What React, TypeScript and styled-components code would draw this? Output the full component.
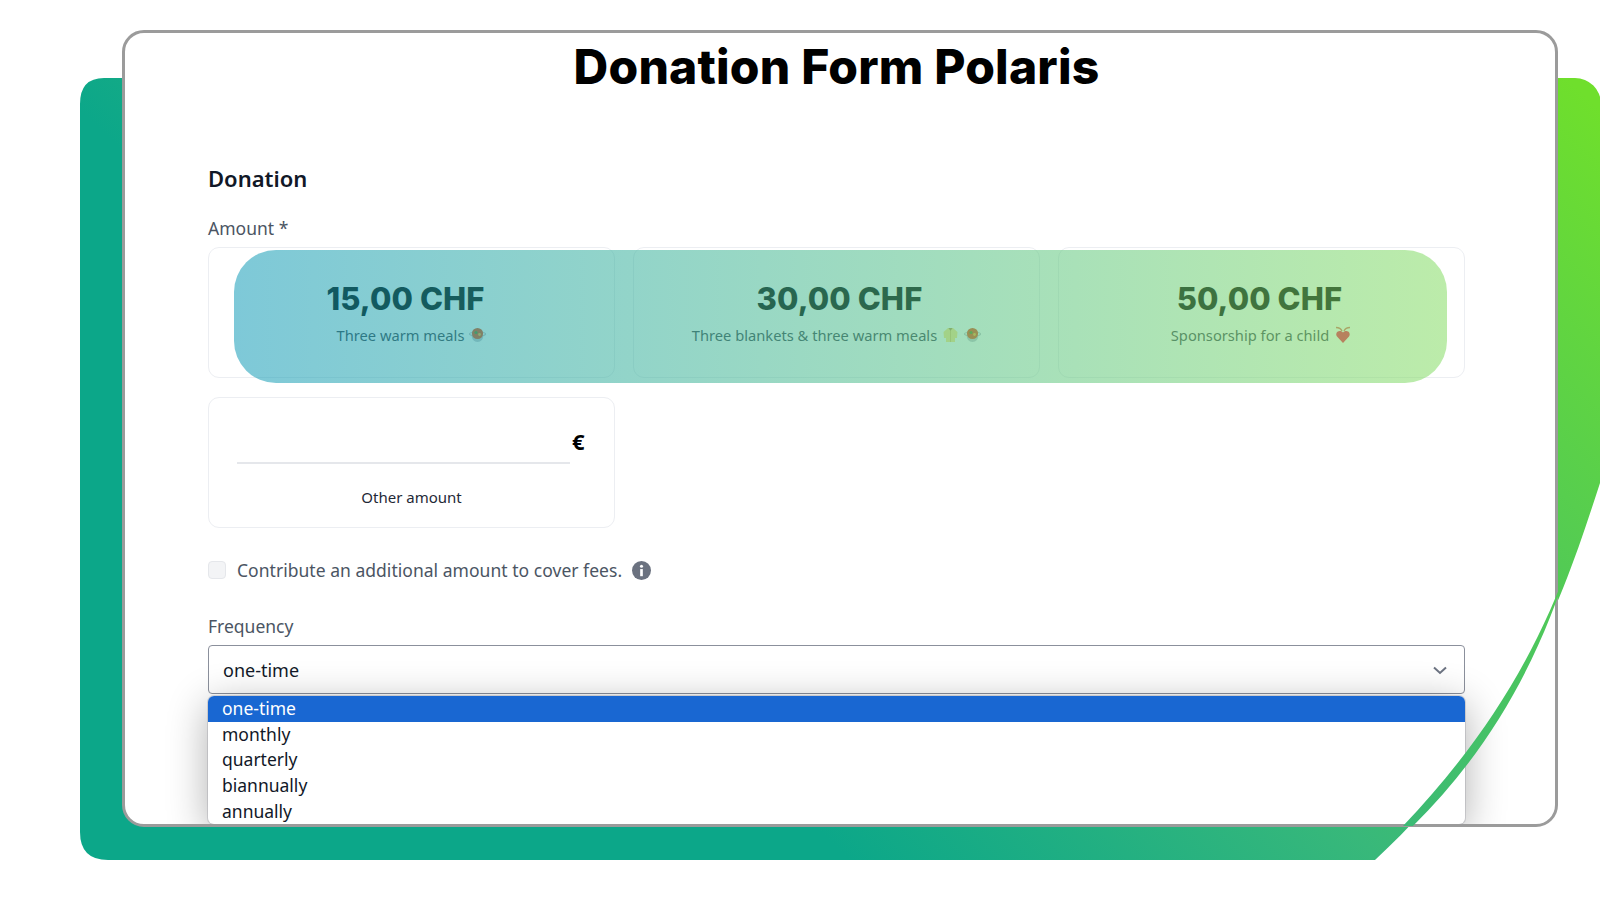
import React from "react";
import styled, { createGlobalStyle } from "styled-components";

const Global = createGlobalStyle`
  html, body { margin: 0; padding: 0; background: #fff; }
  * { box-sizing: border-box; }
`;

const BODY = `"Noto Sans", "Open Sans", sans-serif`;
const HEAD = `Inter, "Liberation Sans", sans-serif`;

const Page = styled.div`
  position: relative;
  width: 1600px;
  height: 900px;
  overflow: hidden;
  padding: 30px 42px 0 122px;
  font-family: ${BODY};
`;
const Art = styled.svg<{ $top?: boolean }>`
  position: absolute;
  inset: 0;
  z-index: ${(p) => (p.$top ? 2 : 0)};
  pointer-events: none;
`;
const Card = styled.main`
  position: relative;
  z-index: 1;
  height: 797px;
  background: #fff;
  border: 3px solid #9b9b9b;
  border-radius: 22px;
  overflow: hidden;
  padding: 0 90px 0 83px;
`;
const Title = styled.h1`
  margin: 6px 0 0;
  height: 56px;
  font: 800 48px/56px ${HEAD};
  letter-spacing: 0.2px;
  color: #000;
  text-align: center;
`;
const Section = styled.h2`
  margin: 68px 0 0;
  font: 600 22px/30px ${BODY};
  color: #111827;
`;
const Label = styled.div`
  font: 400 17.5px/24px ${BODY};
  color: #4b5563;
`;
const AmountLabel = styled(Label)`
  margin-top: 23px;
`;
const Tiles = styled.div`
  position: relative;
  display: grid;
  grid-template-columns: repeat(3, 1fr);
  grid-auto-rows: 131px;
  column-gap: 18px;
  row-gap: 19px;
  margin-top: 7px;
`;
const Tile = styled.div`
  display: flex;
  flex-direction: column;
  align-items: center;
  border: 1.5px solid #eceef2;
  border-radius: 11px;
  background: #fff;
`;
const Price = styled.div<{ $nudge: number }>`
  margin-top: 32px;
  margin-left: ${(p) => Math.max(p.$nudge, 0) * 2}px;
  margin-right: ${(p) => Math.max(-p.$nudge, 0) * 2}px;
  font: 800 31px/38px ${HEAD};
  letter-spacing: 0.1px;
  color: #000;
`;
const Note = styled.div`
  display: flex;
  align-items: center;
  gap: 5px;
  margin-top: 6px;
  font: 400 14.7px/22px ${BODY};
  color: #3f4652;
`;
const Tint = styled.div`
  position: absolute;
  left: 26px;
  top: 3px;
  width: 1213px;
  height: 133px;
  border-radius: 42px;
  background: linear-gradient(90deg, rgba(20, 156, 184, 0.55), rgba(133, 220, 100, 0.55));
`;
const OtherRow = styled.div`
  display: flex;
  align-items: flex-end;
  width: 100%;
  height: 66px;
  padding: 0 27px 0 28px;
`;
const Underline = styled.div`
  flex: 1;
  height: 2px;
  background: #e5e7eb;
`;
const Euro = styled.span`
  margin: 0 0 11px 2px;
  width: 15px;
  font: 700 22px/24px ${BODY};
  color: #000;
`;
const OtherLabel = styled.div`
  margin-top: 22px;
  font: 400 15px/22px ${BODY};
  color: #1f2937;
`;
const FeeRow = styled.label`
  display: flex;
  align-items: center;
  gap: 10px;
  margin-top: 30px;
  height: 24px;
  font: 400 17.5px/24px ${BODY};
  letter-spacing: 0.03px;
  color: #4b5563;
`;
const Check = styled.span`
  width: 18px;
  height: 18px;
  margin-right: 1px;
  border-radius: 4px;
  border: 1px solid #e5e7eb;
  background: #f3f4f6;
`;
const FreqLabel = styled(Label)`
  margin-top: 32px;
`;
const Select = styled.div`
  display: flex;
  align-items: center;
  justify-content: space-between;
  height: 49px;
  margin-top: 7px;
  padding: 0 15px 0 14px;
  border: 1.5px solid #8b909c;
  border-radius: 4px;
  font: 400 18px/24px ${BODY};
  color: #111827;
`;
const Menu = styled.ul`
  list-style: none;
  margin: 2px 0 0;
  padding: 0;
  background: #fff;
  border-radius: 6px;
  overflow: hidden;
  box-shadow: 0 0 0 1px rgba(120, 120, 130, 0.25), 0 8px 40px rgba(0, 0, 0, 0.32);
`;
const Option = styled.li<{ $active?: boolean }>`
  height: 25.7px;
  padding-left: 14px;
  font: 400 17.5px/25.7px ${BODY};
  color: ${(p) => (p.$active ? "#fff" : "#111827")};
  background: ${(p) => (p.$active ? "#1967d2" : "transparent")};
`;

const Soup = () => (
  <svg width="17" height="16" viewBox="0 0 17 16">
    <ellipse cx="8.5" cy="7" rx="8" ry="2" fill="none" stroke="#c0c0ca" strokeWidth="1.2" />
    <path d="M2.5 8 Q3 15 8.5 15 Q14 15 14.5 8 Z" fill="#c9c9d2" />
    <circle cx="8.5" cy="6.5" r="5.6" fill="#e8501a" />
    <circle cx="7" cy="5.5" r="1.6" fill="#5f8a2a" />
    <circle cx="10.5" cy="7.5" r="1.4" fill="#ffb030" />
  </svg>
);
const Coat = () => (
  <svg width="17" height="16" viewBox="0 0 17 16">
    <path d="M6 1 L11 1 L15.5 5 L15 11 L13 11 L13 15 L4 15 L4 11 L2 11 L1.5 5 Z" fill="#ffe68a" />
    <path d="M6.5 1 L8.5 4 L10.5 1 Z" fill="#b59a50" />
    <path d="M8.5 4 L8.5 15" stroke="#e0c060" strokeWidth="0.8" />
  </svg>
);
const Heart = () => (
  <svg width="18" height="18" viewBox="0 0 18 18" fill="none">
    <path d="M9 17 L3 10.5 C0.5 7 5 2.5 9 6.5 C13 2.5 17.5 7 15 10.5 Z" fill="#ff1a4e" />
    <path d="M8 5 Q6.5 1.5 2 1.5 M10 5 Q11.5 1.5 16 1.5" stroke="#e06a60" strokeWidth="1.4" />
  </svg>
);
const Info = () => (
  <svg width="19" height="19" viewBox="0 0 20 20">
    <circle cx="10" cy="10" r="10" fill="#6b7280" />
    <rect x="8.6" y="8.5" width="2.8" height="7.5" fill="#fff" />
    <circle cx="10" cy="5.6" r="1.6" fill="#fff" />
  </svg>
);
const Chevron = () => (
  <svg width="18" height="18" viewBox="0 0 18 18" fill="none">
    <path d="M3 6.5 L9 12 L15 6.5" stroke="#6b7280" strokeWidth="2" />
  </svg>
);

const defs = (
  <defs>
    <linearGradient id="bg" gradientUnits="userSpaceOnUse" x1="850" y1="860" x2="1590" y2="100">
      <stop offset="0" stopColor="#0ca789" />
      <stop offset="0.35" stopColor="#38b87a" />
      <stop offset="1" stopColor="#6fdf2c" />
    </linearGradient>
  </defs>
);

export default function App() {
  return (
    <Page>
      <Global />
      <Art width="1600" height="900" viewBox="0 0 1600 900">
        {defs}
        <path
          d="M104 78 H1575 A26 26 0 0 1 1601 104 V480 C1565 590 1525 720 1375 860 H108 Q80 860 80 832 V104 Q80 78 104 78 Z"
          fill="url(#bg)"
        />
      </Art>
      <Card>
        <Title>Donation Form Polaris</Title>
        <Section>Donation</Section>
        <AmountLabel>Amount *</AmountLabel>
        <Tiles>
          <Tile>
            <Price $nudge={-6}>15,00 CHF</Price>
            <Note>Three warm meals <Soup /></Note>
          </Tile>
          <Tile>
            <Price $nudge={3}>30,00 CHF</Price>
            <Note>Three blankets &amp; three warm meals <Coat /> <Soup /></Note>
          </Tile>
          <Tile>
            <Price $nudge={-2}>50,00 CHF</Price>
            <Note>Sponsorship for a child <Heart /></Note>
          </Tile>
          <Tile>
            <OtherRow><Underline /><Euro>€</Euro></OtherRow>
            <OtherLabel>Other amount</OtherLabel>
          </Tile>
          <Tint />
        </Tiles>
        <FeeRow><Check />Contribute an additional amount to cover fees. <Info /></FeeRow>
        <FreqLabel>Frequency</FreqLabel>
        <Select>one-time<Chevron /></Select>
        <Menu>
          <Option $active>one-time</Option>
          <Option>monthly</Option>
          <Option>quarterly</Option>
          <Option>biannually</Option>
          <Option>annually</Option>
        </Menu>
      </Card>
      <Art $top width="1600" height="900" viewBox="0 0 1600 900">
        {defs}
        <path d="M1572 555 C1535 660 1480 745 1403 826 L1413 826 C1490 750 1540 660 1572 555 Z" fill="url(#bg)" />
      </Art>
    </Page>
  );
}
